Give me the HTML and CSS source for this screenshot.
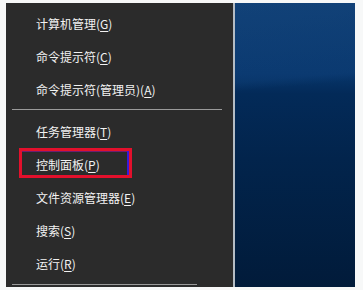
FILE: index.html
```html
<!DOCTYPE html>
<html>
<head>
<meta charset="utf-8">
<link rel="stylesheet" href="styles.css">
</head>
<body>
<div class="screen">
  <div class="menu">
    <div class="item">计算机管理(<u>G</u>)</div>
    <div class="item">命令提示符(<u>C</u>)</div>
    <div class="item">命令提示符(管理员)(<u>A</u>)</div>
    <div class="sep"></div>
    <div class="item">任务管理器(<u>T</u>)</div>
    <div class="item"><span class="mark"></span>控制面板(<u>P</u>)</div>
    <div class="item">文件资源管理器(<u>E</u>)</div>
    <div class="item">搜索(<u>S</u>)</div>
    <div class="item">运行(<u>R</u>)</div>
    <div class="sep short"></div>
  </div>
  <div class="divider"></div>
  <div class="desktop"></div>
</div>
</body>
</html>
```
FILE: styles.css
```css
html, body {
  margin: 0;
  padding: 0;
  background: #f7f8f8;
}
.screen {
  display: flex;
  margin: 3px 8px 3px 6px;
  height: 284px;
}
.menu {
  width: 227px;
  background: #2b2b2b;
  padding-top: 4px;
  box-sizing: border-box;
  font-family: "Noto Sans CJK SC", "Microsoft YaHei", sans-serif;
  font-size: 12px;
  color: #f2f2f2;
}
.item {
  position: relative;
  height: 33px;
  line-height: 33px;
  padding-left: 30px;
  white-space: nowrap;
}
.item u {
  text-decoration-thickness: 1px;
  text-underline-offset: 2px;
}
.mark {
  position: absolute;
  left: 13px;
  top: 0;
  width: 113px;
  height: 30px;
  box-sizing: border-box;
  border: 3px solid #e3102c;
  box-shadow: inset -2px 0 0 #3a1ad8, inset 0 1px 0 #6a2070;
}
.sep {
  height: 1px;
  background: #9a9a9a;
  margin: 3px 11px 5px 6px;
}
.sep.short {
  margin: 4px 36px 0 6px;
}
.divider {
  width: 2px;
  background: #b4bcc4;
}
.desktop {
  flex: 1;
  background:
    linear-gradient(175deg, rgba(30,80,140,0.35) 0%, rgba(20,70,130,0.28) 27%, rgba(0,0,0,0) 30%),
    linear-gradient(180deg, #0b3a6d 0%, #07356a 25%, #032a58 32%, #02244c 55%, #011b3a 100%);
}
```
